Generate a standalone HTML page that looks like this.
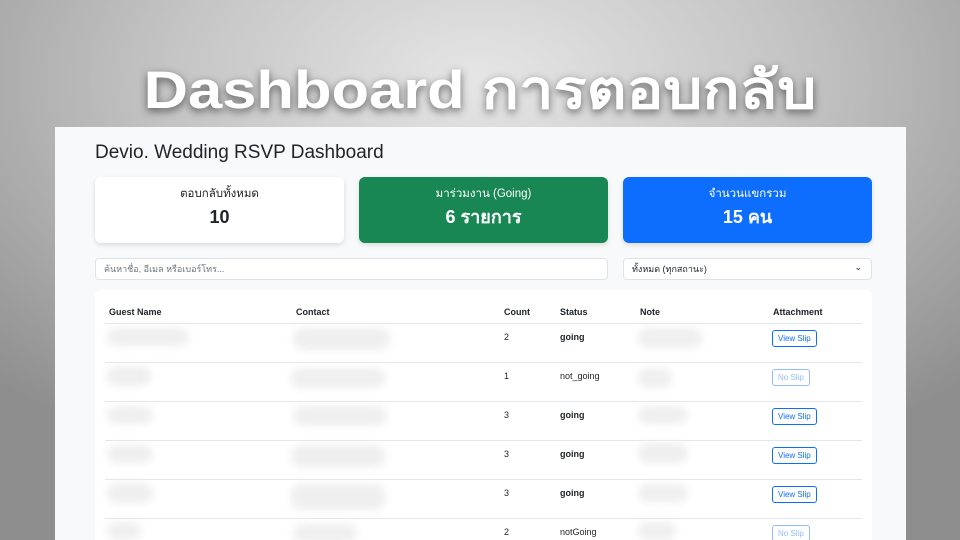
<!DOCTYPE html>
<html><head><meta charset="utf-8"><style>
*{box-sizing:border-box;margin:0;padding:0}
html,body{width:960px;height:540px;overflow:hidden}
body{position:relative;font-family:"Liberation Sans","Noto Sans CJK SC",sans-serif;background:radial-gradient(ellipse 700px 420px at 480px 80px,#e6e6e6 0%,#c4c4c4 45%,#8e8e8e 100%)}
.title{position:absolute;left:0;width:960px;top:51px;text-align:center;font-size:53px;line-height:80px;font-weight:bold;color:#fff;text-shadow:0 3px 8px rgba(0,0,0,.55);transform:scaleX(1.16);transform-origin:480px 0}
.panel{position:absolute;left:55px;top:127px;width:851px;height:413px;background:#f8f9fa;overflow:hidden}
h1{position:absolute;left:40px;top:15px;font-size:19px;font-weight:normal;color:#212529}
.card{position:absolute;top:50px;width:249px;height:66px;border-radius:6px;text-align:center;box-shadow:0 2px 5px rgba(0,0,0,.12)}
.card .l{font-size:11.5px;margin-top:9px;line-height:16px}
.card .v{font-size:18px;margin-top:3px;line-height:24px;font-weight:600}
.inp{position:absolute;top:131px;height:22px;background:#fff;border:1px solid #dee2e6;border-radius:4px;font-size:9px;line-height:12px;color:#6c757d;padding:4px 8px}
.tbl{position:absolute;left:40px;top:163px;width:777px;height:250px;background:#fff;border-radius:6px 6px 0 0;overflow:hidden}
.th{position:absolute;top:17px;font-size:9px;font-weight:bold;color:#212529}
.line{position:absolute;left:10px;right:10px;height:1px;background:#e3e6ea}
.c{position:absolute;font-size:9px;color:#212529}
.btn{position:absolute;font-size:8px;color:#0d6efd;border:1px solid #0d6efd;border-radius:3px;padding:3px 5px;background:#fff}
.btn.d{opacity:.45}
.blur{position:absolute;background:#efefef;border-radius:9px;filter:blur(4px)}
</style></head><body>
<div class="title">Dashboard การตอบกลับ</div>
<div class="panel">
<h1>Devio. Wedding RSVP Dashboard</h1>
<div class="card" style="left:40px;background:#fff;color:#212529"><div class="l">ตอบกลับทั้งหมด</div><div class="v">10</div></div>
<div class="card" style="left:304px;background:#198754;color:#fff"><div class="l">มาร่วมงาน (Going)</div><div class="v">6 รายการ</div></div>
<div class="card" style="left:568px;background:#0d6efd;color:#fff"><div class="l">จำนวนแขกรวม</div><div class="v">15 คน</div></div>
<div class="inp" style="left:40px;width:513px">ค้นหาชื่อ, อีเมล หรือเบอร์โทร...</div>
<div class="inp" style="left:568px;width:249px;color:#212529">ทั้งหมด (ทุกสถานะ)<span style="position:absolute;right:9px;top:2px;font-size:9px">&#8964;</span></div>
<div class="tbl">
<div class="th" style="left:14px">Guest Name</div><div class="th" style="left:201px">Contact</div><div class="th" style="left:409px">Count</div><div class="th" style="left:465px">Status</div><div class="th" style="left:545px">Note</div><div class="th" style="left:678px">Attachment</div>
<div class="line" style="top:33px"></div>
<div class="line" style="top:72px"></div>
<div class="line" style="top:111px"></div>
<div class="line" style="top:150px"></div>
<div class="line" style="top:189px"></div>
<div class="line" style="top:228px"></div>

<div class="blur" style="left:12px;top:38px;width:82px;height:18px"></div><div class="blur" style="left:198px;top:38px;width:97px;height:22px"></div><div class="blur" style="left:543px;top:38px;width:64px;height:20px"></div>
<div class="c" style="left:409px;top:42px">2</div><div class="c" style="left:465px;top:42px;font-weight:bold">going</div><div class="btn" style="left:677px;top:40px">View Slip</div>

<div class="blur" style="left:12px;top:76px;width:44px;height:20px"></div><div class="blur" style="left:196px;top:78px;width:94px;height:20px"></div><div class="blur" style="left:543px;top:78px;width:34px;height:20px"></div>
<div class="c" style="left:409px;top:81px">1</div><div class="c" style="left:465px;top:81px">not_going</div><div class="btn d" style="left:677px;top:79px">No Slip</div>

<div class="blur" style="left:12px;top:116px;width:46px;height:18px"></div><div class="blur" style="left:198px;top:116px;width:94px;height:20px"></div><div class="blur" style="left:543px;top:116px;width:50px;height:18px"></div>
<div class="c" style="left:409px;top:120px">3</div><div class="c" style="left:465px;top:120px;font-weight:bold">going</div><div class="btn" style="left:677px;top:118px">View Slip</div>

<div class="blur" style="left:12px;top:155px;width:46px;height:18px"></div><div class="blur" style="left:196px;top:155px;width:94px;height:22px"></div><div class="blur" style="left:543px;top:153px;width:50px;height:20px"></div>
<div class="c" style="left:409px;top:159px">3</div><div class="c" style="left:465px;top:159px;font-weight:bold">going</div><div class="btn" style="left:677px;top:157px">View Slip</div>

<div class="blur" style="left:12px;top:193px;width:46px;height:20px"></div><div class="blur" style="left:196px;top:194px;width:94px;height:26px"></div><div class="blur" style="left:543px;top:194px;width:50px;height:18px"></div>
<div class="c" style="left:409px;top:198px">3</div><div class="c" style="left:465px;top:198px;font-weight:bold">going</div><div class="btn" style="left:677px;top:196px">View Slip</div>

<div class="blur" style="left:12px;top:232px;width:34px;height:18px"></div><div class="blur" style="left:198px;top:234px;width:64px;height:18px"></div><div class="blur" style="left:543px;top:232px;width:38px;height:18px"></div>
<div class="c" style="left:409px;top:237px">2</div><div class="c" style="left:465px;top:237px">notGoing</div><div class="btn d" style="left:677px;top:235px">No Slip</div>
</div>
</div>
</body></html>
